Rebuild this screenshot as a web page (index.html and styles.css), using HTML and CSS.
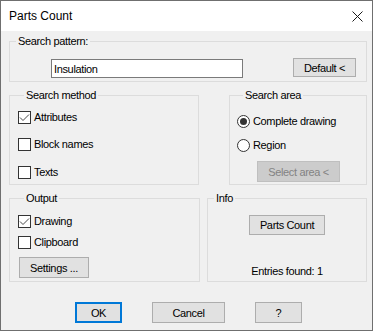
FILE: index.html
```html
<!DOCTYPE html>
<html lang="en">
<head>
  <meta charset="UTF-8" />
  <meta name="viewport" content="width=device-width, initial-scale=1.0" />
  <title>Parts Count</title>
  <link rel="stylesheet" href="styles.css">
</head>
<body>

<div class="dialog">
  <div class="titlebar">
    <span class="title">Parts Count</span>
    <svg class="close" width="11" height="11" viewBox="0 0 11 11">
      <path d="M0.5 0.5 L10.5 10.5 M10.5 0.5 L0.5 10.5" stroke="#1b1b1b" stroke-width="1" fill="none" />
    </svg>
  </div>

  <div class="content">
    <fieldset class="group pattern">
      <legend>Search pattern:</legend>
      <div class="pattern-row">
        <input class="text-input" type="text" value="Insulation" />
        <button class="btn default-btn">Default &lt;</button>
      </div>
    </fieldset>

    <div class="row row-top">
      <fieldset class="group method">
        <legend>Search method</legend>
        <label class="option"><span class="check checked"><svg width="11" height="11" viewBox="0 0 11 11"><path d="M1 5.5 L4 8.5 L10 2.5" stroke="#4a4a4a" stroke-width="1" fill="none" /></svg></span>Attributes</label>
        <label class="option"><span class="check"></span>Block names</label>
        <label class="option"><span class="check"></span>Texts</label>
      </fieldset>

      <fieldset class="group area">
        <legend>Search area</legend>
        <label class="option"><span class="radio checked"><span class="dot"></span></span>Complete drawing</label>
        <label class="option"><span class="radio"></span>Region</label>
        <button class="btn select-btn" disabled>Select area &lt;</button>
      </fieldset>
    </div>

    <div class="row row-bottom">
      <fieldset class="group output">
        <legend>Output</legend>
        <label class="option"><span class="check checked"><svg width="11" height="11" viewBox="0 0 11 11"><path d="M1 5.5 L4 8.5 L10 2.5" stroke="#4a4a4a" stroke-width="1" fill="none" /></svg></span>Drawing</label>
        <label class="option"><span class="check"></span>Clipboard</label>
        <button class="btn settings-btn">Settings ...</button>
      </fieldset>

      <fieldset class="group info">
        <legend>Info</legend>
        <button class="btn count-btn">Parts Count</button>
        <div class="entries">Entries found: 1</div>
      </fieldset>
    </div>

    <div class="actions">
      <button class="btn ok-btn">OK</button>
      <button class="btn cancel-btn">Cancel</button>
      <button class="btn help-btn">?</button>
    </div>
  </div>
</div>

</body>
</html>
```

FILE: styles.css
```css
body {
  margin: 0;
  background-color: #ffffff;
  font-family: 'Liberation Sans', Arial, sans-serif;
  font-size: 11px;
  color: #000000;
}
.dialog {
  box-sizing: border-box;
  width: 373px;
  height: 331px;
  border: 1px solid #6f6f6f;
  background-color: #f0f0f0;
  display: flex;
  flex-direction: column;
}
.titlebar {
  height: 30px;
  background-color: #ffffff;
  display: flex;
  align-items: center;
  padding-left: 8px;
}
.title {
  font-size: 12px;
  line-height: 30px;
}
.close {
  margin-left: auto;
  margin-right: 9px;
}
.content {
  padding: 4px 0 0 8px;
  letter-spacing: -0.35px;
}
.group {
  margin: 0;
  padding: 0;
  border: 1px solid #dcdcdc;
  min-width: 0;
}
.group legend {
  margin-left: 6px;
  padding: 0 2px;
  line-height: 13px;
}
.pattern {
  width: 358px;
  box-sizing: border-box;
  padding: 10px 0 3px 0;
}
.pattern-row {
  display: flex;
  align-items: flex-start;
}
.text-input {
  box-sizing: border-box;
  width: 192px;
  height: 19px;
  margin: 1px 0 0 41px;
  padding: 0 2px;
  border: 1px solid #7a7a7a;
  background-color: #ffffff;
  font-family: inherit;
  font-size: 11px;
  letter-spacing: -0.35px;
  outline: none;
}
.btn {
  box-sizing: border-box;
  height: 21px;
  padding: 0;
  border: 1px solid #adadad;
  background-color: #e1e1e1;
  font-family: inherit;
  font-size: 11px;
  letter-spacing: -0.35px;
  color: #000000;
}
.default-btn {
  width: 63px;
  height: 19px;
  margin-left: auto;
  margin-right: 10px;
}
.row {
  display: grid;
  width: 358px;
  margin-top: 7px;
}
.row-top {
  grid-template-columns: 190px 138px;
  column-gap: 30px;
}
.row-bottom {
  grid-template-columns: 191px 160px;
  column-gap: 7px;
}
.option {
  display: flex;
  align-items: center;
  height: 13px;
  line-height: 13px;
}
.check {
  box-sizing: border-box;
  width: 13px;
  height: 13px;
  border: 1px solid #333333;
  background-color: #ffffff;
  margin-right: 3px;
  display: flex;
}
.radio {
  box-sizing: border-box;
  width: 13px;
  height: 13px;
  border: 1px solid #333333;
  border-radius: 50%;
  background-color: #ffffff;
  margin-right: 3px;
  display: flex;
  align-items: center;
  justify-content: center;
}
.dot {
  width: 7px;
  height: 7px;
  border-radius: 50%;
  background-color: #333333;
}
.method {
  padding: 9px 0 0 8px;
  display: flex;
  flex-direction: column;
  gap: 14px;
}
.method .option:last-child {
  margin-top: 1px;
}
.area {
  padding: 13px 0 2px 7px;
  display: flex;
  flex-direction: column;
  align-items: flex-start;
}
.area .option + .option {
  margin-top: 11px;
}
.select-btn {
  width: 83px;
  margin: 9px 0 0 20px;
  background-color: #cccccc;
  border-color: #bfbfbf;
  color: #838383;
}
.output {
  padding: 10px 0 3px 8px;
  display: flex;
  flex-direction: column;
  align-items: flex-start;
  gap: 8px;
}
.settings-btn {
  width: 70px;
  margin-left: 1px;
}
.info {
  padding: 10px 0 3px 0;
  display: flex;
  flex-direction: column;
  align-items: center;
}
.count-btn {
  width: 76px;
  height: 20px;
}
.entries {
  margin-top: auto;
  line-height: 13px;
}
.actions {
  display: flex;
  gap: 30px;
  margin-top: 20px;
  padding-left: 66px;
}
.ok-btn {
  width: 47px;
  border: 2px solid #0078d7;
}
.cancel-btn {
  width: 73px;
}
.help-btn {
  width: 47px;
}
```
